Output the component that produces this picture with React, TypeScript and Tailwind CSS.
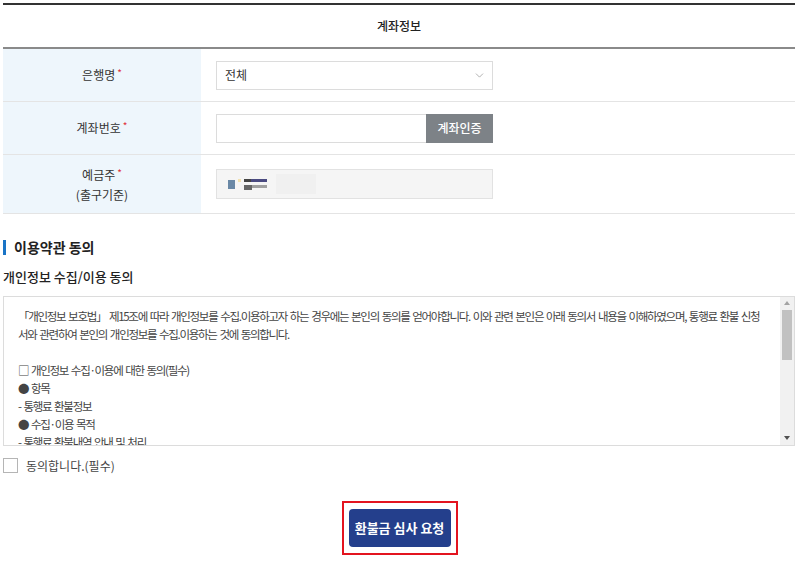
import { ChevronDown } from 'lucide-react'

const font = { fontFamily: '"Noto Sans CJK KR", "Noto Sans", sans-serif' }

function Label({ children }: { children: React.ReactNode }) {
  return (
    <div className="w-[198px] shrink-0 bg-[#eef6fc] flex flex-col items-center justify-center text-[12px] text-[#333] leading-[19px]">
      {children}
    </div>
  )
}

const Star = () => <span className="text-[#e0303a] ml-[2px] relative -top-[3px] text-[10px]">*</span>

const terms = [
  '「개인정보 보호법」 제15조에 따라 개인정보를 수집.이용하고자 하는 경우에는 본인의 동의를 얻어야합니다. 이와 관련 본인은 아래 동의서 내용을 이해하였으며, 통행료 환불 신청',
  '서와 관련하여 본인의 개인정보를 수집.이용하는 것에 동의합니다.',
  '',
  '□ 개인정보 수집·이용에 대한 동의(필수)',
  '● 항목',
  '- 통행료 환불정보',
  '● 수집·이용 목적',
  '- 통행료 환불내역 안내 및 처리',
]

export default function App() {
  return (
    <div className="w-[800px] h-[565px] bg-white pl-[3px] pr-[5px] pt-[3px]" style={font}>
      <div className="border-t-2 border-[#333] h-[44px] flex items-center justify-center text-[12px] font-medium text-[#222]">
        계좌정보
      </div>
      <div className="border-t-2 border-[#8a8a8a]">
        <div className="flex h-[53px] border-b border-[#e4e4e4]">
          <Label><span>은행명<Star /></span></Label>
          <div className="flex items-center pl-[15px]">
            <div className="w-[277px] h-[29px] border border-[#dcdcdc] flex items-center justify-between pl-[8px] pr-[6px] text-[12px] text-[#333]">
              <span>전체</span>
              <ChevronDown size={13} strokeWidth={1.2} className="text-[#888]" />
            </div>
          </div>
        </div>
        <div className="flex h-[53px] border-b border-[#e4e4e4]">
          <Label><span>계좌번호<Star /></span></Label>
          <div className="flex items-center pl-[15px]">
            <div className="w-[210px] h-[29px] border border-[#dcdcdc] border-r-0" />
            <div className="w-[67px] h-[29px] bg-[#7d8287] text-white text-[12px] font-medium flex items-center justify-center">
              계좌인증
            </div>
          </div>
        </div>
        <div className="flex h-[59px] border-b border-[#e4e4e4]">
          <Label>
            <span>예금주<Star /></span>
            <span>(출구기준)</span>
          </Label>
          <div className="flex items-center pl-[15px]">
            <div className="w-[277px] h-[30px] border border-[#e2e2e2] bg-[#f5f5f5] flex items-center pl-[11px] gap-[3px]">
              <div className="w-[7px] h-[9px] bg-[#6a88a6]" />
              <div className="w-[3px] h-[3px] bg-[#f2e2b0] self-start mt-[9px]" />
              <div className="flex flex-col gap-[3px]">
                <div className="flex">
                  <div className="w-[7px] h-[3px] bg-[#444]" />
                  <div className="w-[16px] h-[3px] bg-[#4a4a80]" />
                </div>
                <div className="flex">
                  <div className="w-[8px] h-[5px] bg-[#666]" />
                  <div className="w-[15px] h-[3px] bg-[#a0a0a0]" />
                </div>
              </div>
              <div className="w-[40px] h-[20px] bg-[#f0f0f0] ml-[6px]" />
            </div>
          </div>
        </div>
      </div>

      <div className="mt-[23px] flex items-center gap-[8px]">
        <div className="w-[3px] h-[15px] bg-[#1a74c6]" />
        <h2 className="text-[14px] font-bold text-[#222]">이용약관 동의</h2>
      </div>
      <h3 className="mt-[9px] text-[13px] font-medium text-[#222]">개인정보 수집/이용 동의</h3>

      <div className="mt-[9px] h-[150px] border border-[#dcdcdc] flex">
        <div className="flex-1 overflow-hidden pl-[14px] pt-[10px] text-[11.5px] tracking-[-1.3px] [word-spacing:1.5px] leading-[18px] text-[#444]">
          {terms.map((t, i) => (
            <div key={i} className="whitespace-nowrap h-[18px]">{t}</div>
          ))}
        </div>
        <div className="w-[14px] bg-[#f1f1f1] flex flex-col items-center">
          <div className="h-[13px] flex items-center justify-center">
            <div className="w-0 h-0 border-l-[3px] border-r-[3px] border-b-[4px] border-transparent border-b-[#a3a3a3]" />
          </div>
          <div className="w-[10px] h-[50px] bg-[#c1c1c1]" />
          <div className="flex-1" />
          <div className="h-[13px] flex items-center justify-center">
            <div className="w-0 h-0 border-l-[3px] border-r-[3px] border-t-[4px] border-transparent border-t-[#505050]" />
          </div>
        </div>
      </div>

      <div className="mt-[11px] flex items-center gap-[8px]">
        <div className="w-[15px] h-[15px] border border-[#b5b5b5] bg-white" />
        <span className="text-[12px] text-[#444]">동의합니다.(필수)</span>
      </div>

      <div className="mt-[26px] flex justify-center">
        <div className="border-2 border-[#e3141f] px-[5px] py-[6px] ml-[1px]">
          <button className="w-[102px] h-[38px] rounded-[4px] bg-[#243f8c] text-white text-[13px] font-bold">
            환불금 심사 요청
          </button>
        </div>
      </div>
    </div>
  )
}
